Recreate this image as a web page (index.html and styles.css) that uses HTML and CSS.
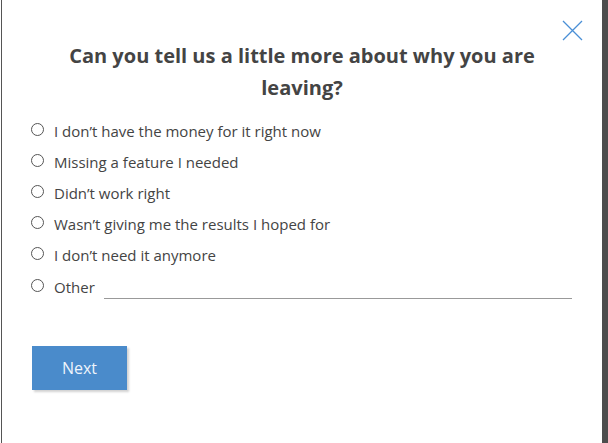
FILE: index.html
```html
<!DOCTYPE html>
<html>
<head>
<meta charset="utf-8">
<link rel="stylesheet" href="styles.css">
</head>
<body>
<div class="modal">
  <button class="close" aria-label="Close">
    <svg width="21" height="21" viewBox="0 0 21 21"><path d="M1 1 L20 20 M20 1 L1 20" stroke="#4a8fd6" stroke-width="1.3" fill="none"/></svg>
  </button>
  <h1 class="title">Can you tell us a little more about why you are leaving?</h1>
  <ul class="options">
    <li class="option"><span class="radio"></span><span>I don’t have the money for it right now</span></li>
    <li class="option"><span class="radio"></span><span>Missing a feature I needed</span></li>
    <li class="option"><span class="radio"></span><span>Didn’t work right</span></li>
    <li class="option"><span class="radio"></span><span>Wasn’t giving me the results I hoped for</span></li>
    <li class="option"><span class="radio"></span><span>I don’t need it anymore</span></li>
    <li class="option"><span class="radio"></span><span>Other</span><span class="other-line"></span></li>
  </ul>
  <button class="next">Next</button>
</div>
</body>
</html>
```
FILE: styles.css
```css
html, body {
  margin: 0;
  padding: 0;
  background: #fff;
}
body {
  font-family: "Open Sans", sans-serif;
  color: #444;
}
.modal {
  position: relative;
  margin-left: 1px;
  width: 600px;
  height: 443px;
  border-left: 1px solid #555;
  border-right: 6px solid #4d4d4d;
  box-sizing: content-box;
  padding: 0;
}
.close {
  position: absolute;
  top: 20px;
  left: 560px;
  background: none;
  border: 0;
  padding: 0;
  width: 21px;
  height: 21px;
}
.close svg { display: block; }
.title {
  margin: 0;
  padding: 40px 60px 0 60px;
  font-size: 20px;
  font-weight: 700;
  line-height: 32px;
  text-align: center;
  color: #444;
}
.options {
  list-style: none;
  margin: 11px 0 0 0;
  padding: 0 0 0 29px;
}
.option {
  display: flex;
  align-items: center;
  height: 31.2px;
  font-size: 15px;
}
.radio {
  width: 11px;
  height: 11px;
  border: 1px solid #555;
  border-radius: 50%;
  margin-right: 10px;
  margin-left: 0;
  margin-top: -3px;
  flex: none;
}
.other-line {
  flex: none;
  width: 468px;
  height: 1px;
  background: #999;
  margin-left: 9px;
  align-self: flex-end;
  margin-bottom: 3px;
}
.next {
  display: block;
  margin: 44px 0 0 30px;
  width: 95px;
  height: 44px;
  background: #4a8bcb;
  color: #eef4fb;
  border: 0;
  font-family: "Open Sans", sans-serif;
  font-size: 16px;
  box-shadow: 2px 2px 2px rgba(0,0,0,0.18);
}
```
